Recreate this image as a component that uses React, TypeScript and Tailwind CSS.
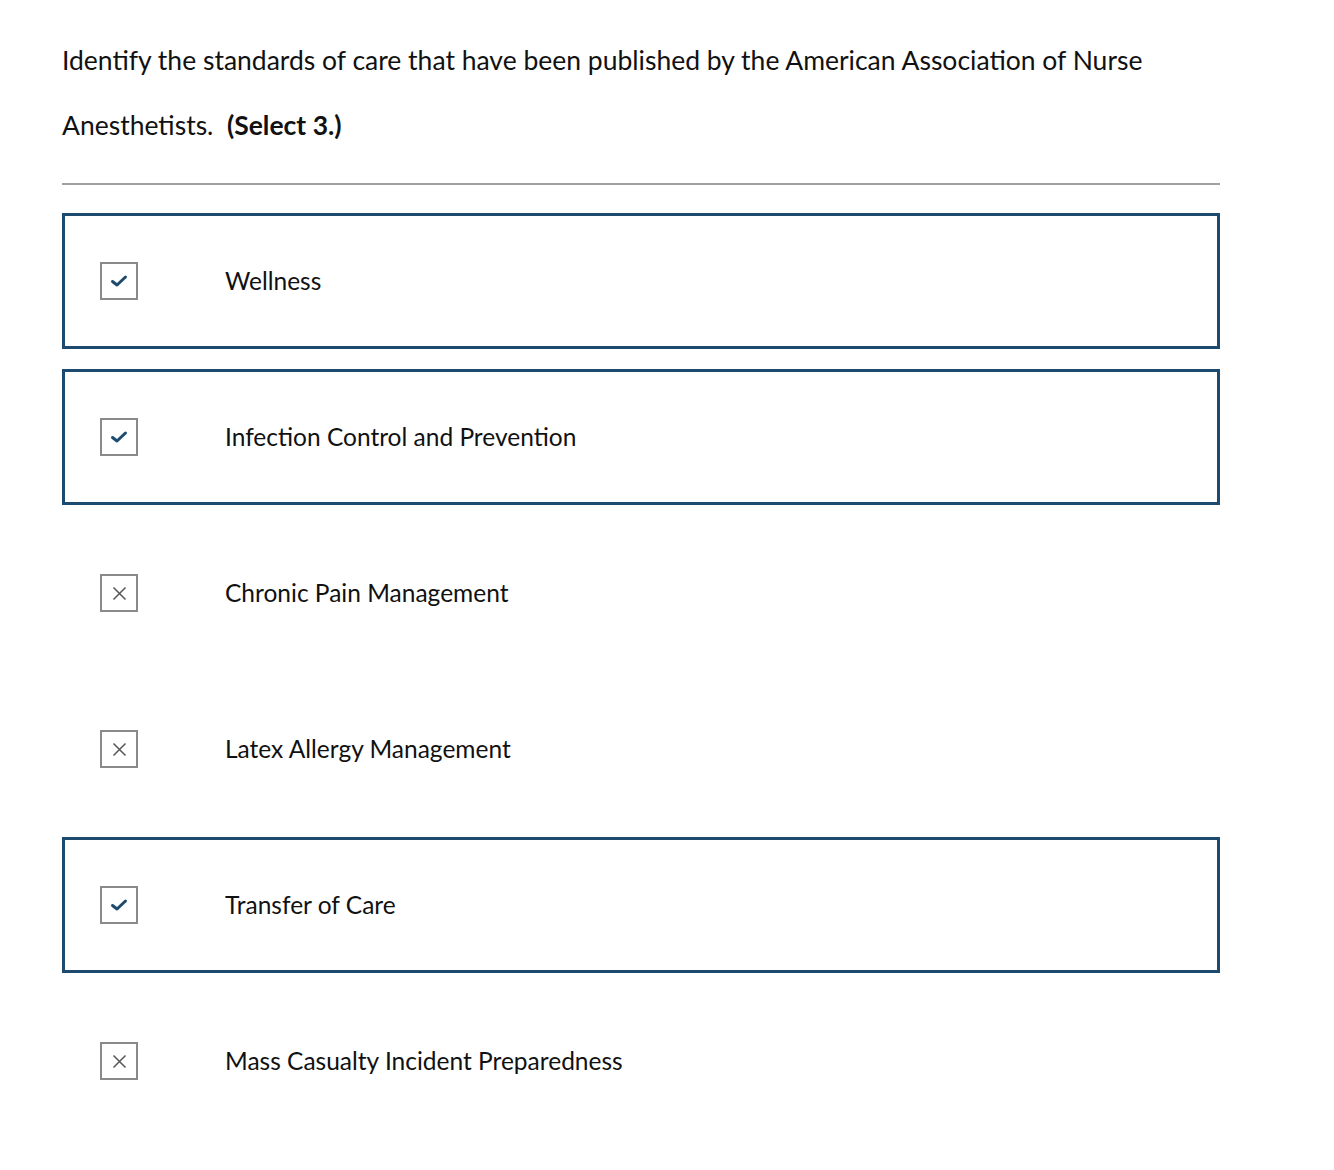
import React from 'react';

const options = [
  { label: 'Wellness', checked: true },
  { label: 'Infection Control and Prevention', checked: true },
  { label: 'Chronic Pain Management', checked: false },
  { label: 'Latex Allergy Management', checked: false },
  { label: 'Transfer of Care', checked: true },
  { label: 'Mass Casualty Incident Preparedness', checked: false },
];

function CheckIcon() {
  return (
    <svg width="18" height="14" viewBox="0 0 18 14" fill="none">
      <path d="M2.5 7.5 L7 11 L15.5 3" stroke="#1d4a6f" strokeWidth="3" strokeLinecap="round" strokeLinejoin="round" />
    </svg>
  );
}

function XIcon() {
  return (
    <svg width="15" height="15" viewBox="0 0 15 15" fill="none">
      <path d="M1.5 1.5 L13.5 13.5 M13.5 1.5 L1.5 13.5" stroke="#555" strokeWidth="1.5" />
    </svg>
  );
}

export default function App() {
  return (
    <div className="min-h-screen bg-white text-[#111] font-['Lato',sans-serif]">
      <div className="pl-[62px] pt-[28px] w-[1220px]">
        <p className="text-[26.5px] leading-[65px]">
          Identify the standards of care that have been published by the American Association of Nurse Anesthetists.&nbsp;{' '}
          <strong className="font-bold">(Select 3.)</strong>
        </p>
        <div className="mt-[25px] h-[2px] bg-[#a0a0a0]" />
        <div className="mt-[28px] flex flex-col gap-5">
          {options.map((o) => (
            <div
              key={o.label}
              className={`flex items-center h-[136px] border-[3px] pl-[35px] ${
                o.checked ? 'border-[#1d4a6f]' : 'border-transparent'
              }`}
            >
              <div className="w-[38px] h-[38px] border-2 border-[#8a8a8a] flex items-center justify-center shrink-0">
                {o.checked ? <CheckIcon /> : <XIcon />}
              </div>
              <span className="ml-[87px] text-[24.5px]">{o.label}</span>
            </div>
          ))}
        </div>
      </div>
    </div>
  );
}
